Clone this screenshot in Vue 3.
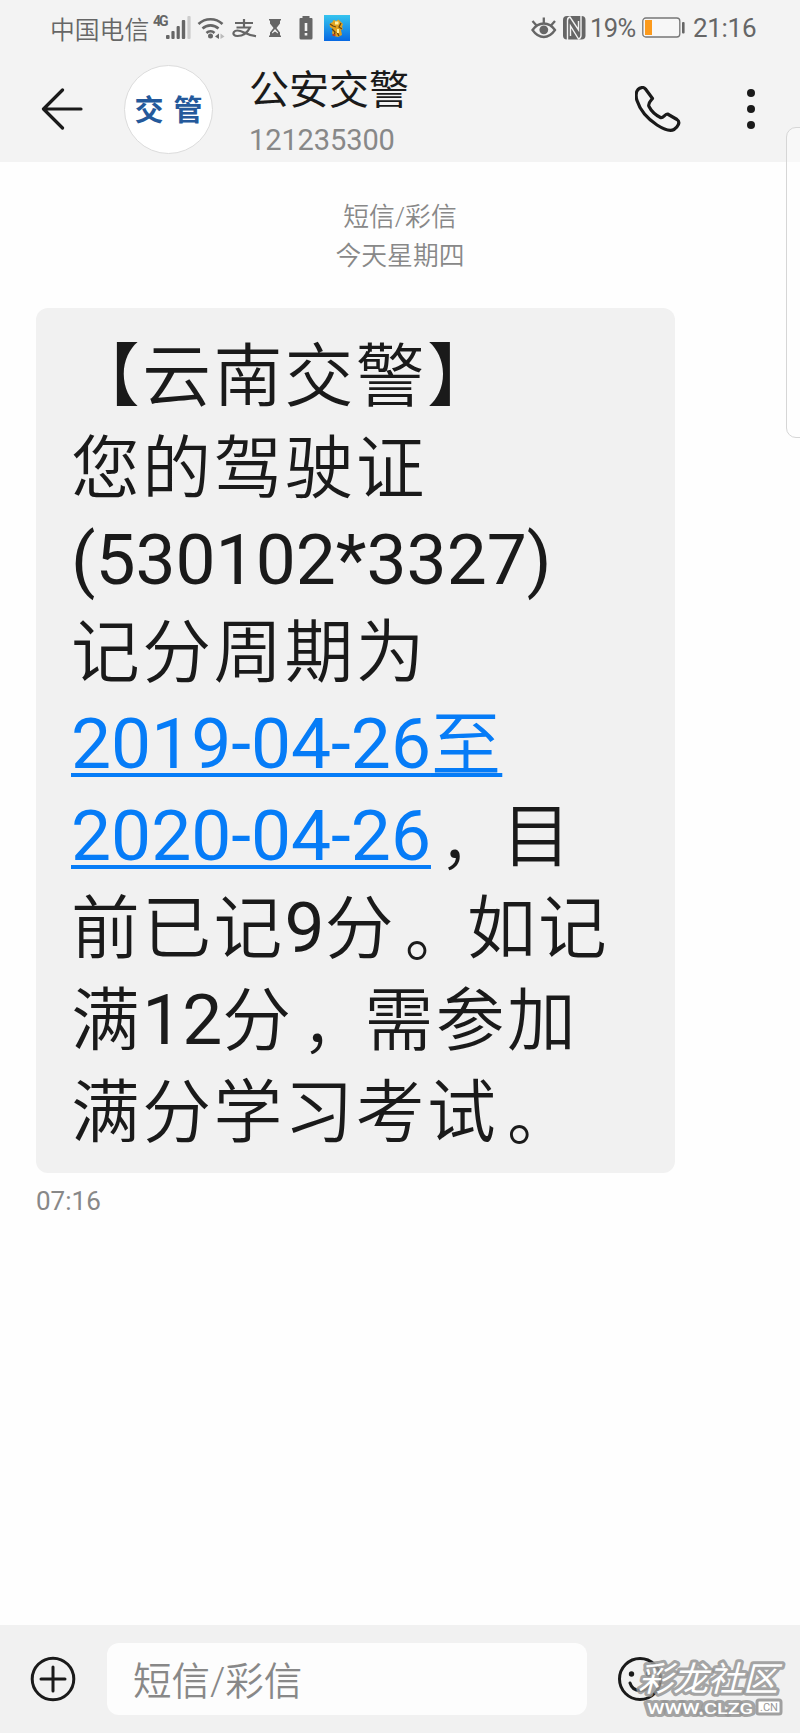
<template>
  <div class="phone">
    <header class="top">
      <div class="status-bar">
        <div class="status-left">
          <span class="carrier">中国电信</span>
          <span class="network">4G</span>
          <svg class="signal" width="26" height="24" viewBox="0 0 26 24">
            <rect x="0" y="19" width="3.6" height="4" rx="1" fill="#666" />
            <rect x="5.4" y="15" width="3.2" height="8" rx="1" fill="#666" />
            <rect x="10.6" y="10" width="3.2" height="13" rx="1" fill="#666" />
            <rect x="15.8" y="4" width="3.4" height="19" rx="1" fill="#666" />
            <rect x="21.4" y="0" width="3.2" height="23" rx="1" fill="#ccc" />
          </svg>
          <svg class="wifi" width="28" height="24" viewBox="0 0 28 24" fill="none" stroke="#666" stroke-width="2.6">
            <path d="M1.5 8a17.5 17.5 0 0 1 24 0" />
            <path d="M5.5 12.5a11.7 11.7 0 0 1 16 0" />
            <path d="M9.5 17a5.8 5.8 0 0 1 8 0" />
            <circle cx="13.5" cy="20" r="2.5" fill="#666" stroke="none" />
            <path d="M22 17.5v5.5l-4-2.5z" fill="#666" stroke="none" />
            <path d="M23.5 17.5v5.5l4-2.5z" fill="#bbb" stroke="none" />
          </svg>
          <svg class="pay" width="25" height="19" viewBox="0 0 25 19" fill="none" stroke="#666" stroke-width="2.2">
            <path d="M3 4h18M12 0v8.5M4.5 8.5h13.5C15.5 13.5 11 17 5.5 17 2 17 .8 15 1.8 13.2 3.5 10.8 8 11.5 12 13.5c4 2 7 3 12 3.7" />
          </svg>
          <svg class="hourglass" width="14" height="18" viewBox="0 0 14 18">
            <path d="M1 0h12v1.5h-1v3L8.5 9l3.5 4.5v3h1V18H1v-1.5h1v-3L5.5 9 2 4.5v-3H1z" fill="#666" />
            <path d="M7 10l3 3.5v1L7 12.5l-3 2v-1z" fill="#f3f3f3" />
          </svg>
          <svg class="alert" width="14" height="24" viewBox="0 0 14 24">
            <path d="M3.5 0h7v2h2q1 0 1 1v19q0 1.5-1.5 1.5h-10Q.5 23.5.5 22V3q0-1 1-1h2z" fill="#666" />
            <path d="M5.7 7h2.6v8H5.7zM5.7 17h2.6v2.5H5.7z" fill="#f3f3f3" />
          </svg>
          <svg class="game" width="26" height="26" viewBox="0 0 26 26">
            <defs>
              <linearGradient id="sky" x1="0" y1="0" x2="0" y2="1">
                <stop offset="0" stop-color="#35c4ee" />
                <stop offset="1" stop-color="#0768e2" />
              </linearGradient>
            </defs>
            <rect width="26" height="26" fill="url(#sky)" />
            <path d="M5.5 9l3-2 1-2 3 1 2-1.5L17 7l2 2-1 3 1 2-2 1 1 5-4 2-4-1-2-3 1-4-3-2z" fill="#e0a21f" />
            <path d="M6 9l3 2 3 1M8 14l3 3-1 4M17 8l-2 4 3 2M13 17l2 4" stroke="#684514" stroke-width="1.3" fill="none" />
            <path d="M11 6.5h3.5v3H11zM13 14h2v4h-2z" fill="#fff0a0" />
            <path d="M8.5 19h3v2h-3z" fill="#b7402a" />
          </svg>
        </div>
        <div class="status-right">
          <svg class="eye" width="26" height="22" viewBox="0 0 26 22" fill="none" stroke="#666" stroke-width="2.3">
            <path d="M1.5 13C5 8 9 6.5 12.8 6.5S20.5 8 24 13c-3.5 5-7.5 7-11.2 7S5 18 1.5 13z" />
            <path d="M12.8 6V.5M5.5 8.5L1.5 4M20 8.5L24 4" />
            <circle cx="12.8" cy="12.8" r="4.4" fill="#666" stroke="none" />
          </svg>
          <svg class="nfc" width="24" height="24" viewBox="0 0 24 24">
            <rect x="1" y="0" width="22.5" height="23.5" rx="4" fill="#666" />
            <path d="M5.5 24V4.5Q5.5 1.5 8 1l8.500 13V5M19 0v19.5q0 2.500-2.500 3.500L8.500 10v10" fill="none" stroke="#f3f3f3" stroke-width="1.4" />
          </svg>
          <span class="percent">19%</span>
          <svg class="battery" width="44" height="22" viewBox="0 0 44 22">
            <rect x=".8" y="1" width="37" height="19" rx="3" fill="#f7f7f7" stroke="#777" stroke-width="1.3" />
            <rect x="3" y="3" width="7" height="15" fill="#fc9a1c" />
            <rect x="40" y="5" width="2.6" height="11.5" rx="1" fill="#666" />
          </svg>
          <span class="clock">21:16</span>
        </div>
      </div>
      <div class="title-bar">
        <svg class="back" width="42" height="42" viewBox="0 0 42 42">
          <path d="M21.5 2L2.5 21l19 19M3 21h37" fill="none" stroke="#1a1a1a" stroke-width="3.2" stroke-linecap="round" stroke-linejoin="round" />
        </svg>
        <div class="avatar"><span>交</span><span>管</span></div>
        <div class="contact">
          <div class="name">公安交警</div>
          <div class="number">121235300</div>
        </div>
        <svg class="call" width="46" height="46" viewBox="0 0 46 46">
          <path d="M3 3.500C5 1.500 8.500.5 10.500 3L17.500 12.500C15.500 15 12.500 17.500 14 20.500C16 24.500 20.500 29 25.500 31.500C28 32.700 30 28 32.500 28L42 33.500C46 36 42.500 41.500 39 43.500C34.500 46 27.500 42.500 22 39C13 33 5 24 2 14.500C.5 9.500.8 6 3 3.500Z" fill="none" stroke="#1a1a1a" stroke-width="3.2" stroke-linejoin="round" />
        </svg>
        <svg class="more" width="8" height="42" viewBox="0 0 8 42">
          <circle v-for="y in [5, 21, 37]" :key="y" cx="4" :cy="y" r="4" fill="#1a1a1a" />
        </svg>
      </div>
    </header>

    <main class="thread">
      <div class="thread-info">
        <div>短信/彩信</div>
        <div>今天星期四</div>
      </div>
      <div class="bubble">
        <div class="line" v-for="(line, index) in lines" :key="index">
          <span v-for="(part, i) in line" :key="i" :class="part.type">{{ part.text }}</span>
        </div>
      </div>
      <div class="time">07:16</div>
    </main>

    <footer class="composer">
      <svg class="add" width="46" height="46" viewBox="0 0 46 46" fill="none" stroke="#1a1a1a" stroke-width="3">
        <circle cx="23" cy="23" r="20.8" />
        <path d="M23 11v24M11 23h24" stroke-linecap="round" />
      </svg>
      <input class="message-input" v-model="message" placeholder="短信/彩信" />
      <svg class="smile" width="46" height="46" viewBox="0 0 46 46" fill="none" stroke="#1a1a1a" stroke-width="3">
        <circle cx="23" cy="23" r="20.5" />
        <circle cx="14.5" cy="18" r="2.7" fill="#1a1a1a" stroke="none" />
        <circle cx="31.5" cy="18" r="2.7" fill="#1a1a1a" stroke="none" />
        <path d="M13 27c3 10 17 10 20 0" stroke-linecap="round" />
      </svg>
    </footer>

    <div class="edge-panel"></div>
    <svg class="watermark" width="156" height="72" viewBox="0 0 156 72">
      <text class="wm-name" x="6" y="35" textLength="140" lengthAdjust="spacingAndGlyphs">彩龙社区</text>
      <text class="wm-url" x="15" y="58" textLength="106" lengthAdjust="spacingAndGlyphs">WWW.CLZG</text>
      <rect x="125" y="44" width="24" height="14" rx="2" fill="#fff" stroke="#a0a0a0" stroke-width="3" />
      <text class="wm-cn" x="128" y="55" textLength="18" lengthAdjust="spacingAndGlyphs">.CN</text>
    </svg>
  </div>
</template>

<script setup>
import { ref } from 'vue'

const message = ref('')

const lines = [
  [{ text: '【云南交警】', type: 'han' }],
  [{ text: '您的驾驶证', type: 'han' }],
  [{ text: '(530102*3327)' }],
  [{ text: '记分周期为', type: 'han' }],
  [{ text: '2019-04-26', type: 'date' }, { text: '至', type: 'date date-han' }],
  [{ text: '2020-04-26', type: 'date' }, { text: '，', type: 'mark' }, { text: '目', type: 'han' }],
  [
    { text: '前已记', type: 'han' },
    { text: '9' },
    { text: '分', type: 'han' },
    { text: '。', type: 'mark' },
    { text: '如记', type: 'han' },
  ],
  [
    { text: '满', type: 'han' },
    { text: '12' },
    { text: '分', type: 'han' },
    { text: '，', type: 'mark' },
    { text: '需参加', type: 'han' },
  ],
  [{ text: '满分学习考试', type: 'han' }, { text: '。', type: 'mark' }],
]
</script>

<style>
body {
  background: #fff;
}
</style>

<style scoped>
.phone {
  position: relative;
  display: flex;
  flex-direction: column;
  width: 800px;
  height: 1733px;
  overflow: hidden;
  background: #fefefe;
  color: #1a1a1a;
  font-family: Roboto, 'Noto Sans CJK SC', sans-serif;
  text-spacing-trim: space-all;
}

.phone svg {
  display: block;
  flex-shrink: 0;
}

.top {
  height: 162px;
  background: #f3f3f3;
}

.status-bar {
  display: flex;
  justify-content: space-between;
  height: 56px;
  padding: 0 45px 0 50px;
  color: #666;
  font-size: 26px;
}

.status-left,
.status-right {
  display: flex;
  align-items: center;
}

.carrier {
  width: 103px;
  font-family: 'Noto Sans CJK SC DemiLight', 'Noto Sans CJK SC', sans-serif;
  font-size: 24.8px;
  font-weight: 350;
  white-space: nowrap;
}

.network {
  width: 13px;
  margin-top: -14px;
  font-size: 14px;
  font-weight: 700;
  letter-spacing: -2px;
}

.wifi {
  margin-left: 5px;
}

.pay {
  margin-left: 7px;
}

.hourglass {
  margin-left: 11px;
}

.alert {
  margin-left: 17px;
}

.game {
  margin-left: 11px;
}

.nfc {
  margin-left: 5px;
}

.percent {
  width: 52px;
  margin-left: 4px;
  font-size: 25.5px;
  letter-spacing: -0.6px;
}

.battery {
  margin-right: 7px;
}

.clock {
  width: 62px;
  letter-spacing: -0.3px;
}

.title-bar {
  display: flex;
  align-items: center;
  height: 106px;
  padding-left: 41px;
}

.avatar {
  display: flex;
  align-items: center;
  justify-content: center;
  gap: 10px;
  box-sizing: border-box;
  width: 89px;
  height: 89px;
  padding-bottom: 3px;
  margin-left: 41px;
  border: 1px solid #dcdcdc;
  border-radius: 50%;
  background: #fff;
  color: #24599b;
  font-size: 29px;
  font-weight: 700;
}

.contact {
  width: 348px;
  margin-left: 36px;
}

.name {
  height: 46px;
  margin-top: 7px;
  font-size: 40px;
  line-height: 44px;
}

.number {
  height: 34px;
  margin-top: 8px;
  color: #888;
  font-size: 29px;
  line-height: 34px;
  letter-spacing: -0.1px;
}

.call {
  margin-left: 38px;
}

.more {
  margin-left: 66px;
}

.thread {
  flex: 1;
  padding: 36px 36px 0;
}

.thread-info {
  height: 110px;
  color: #888;
  font-family: Roboto, 'Noto Sans CJK SC DemiLight', 'Noto Sans CJK SC', sans-serif;
  font-size: 25.8px;
  font-weight: 350;
  line-height: 39px;
  text-align: center;
}

.bubble {
  box-sizing: border-box;
  width: 639px;
  height: 865px;
  padding: 22px 35px 0;
  border-radius: 12px;
  background: #f1f1f1;
  font-size: 71.3px;
}

.line {
  display: flex;
  height: 92px;
  line-height: 92px;
  white-space: nowrap;
}

.han {
  margin-top: -5px;
  font-family: 'Noto Sans CJK SC DemiLight', 'Noto Sans CJK SC', sans-serif;
  font-size: 68.8px;
  font-weight: 350;
  letter-spacing: 2.4px;
}

.date {
  height: 80px;
  color: #067cf7;
  text-decoration: underline;
  text-decoration-thickness: 4px;
  text-underline-offset: 5px;
  text-decoration-skip-ink: none;
}

.date-han {
  margin-top: 2px;
  font-family: Roboto, 'Noto Sans CJK SC DemiLight', 'Noto Sans CJK SC', sans-serif;
  font-weight: 350;
  font-size: 70px;
  letter-spacing: 1.3px;
  text-underline-offset: 3px;
}

/* fullwidth punctuation sits nearer the middle of its cell */
.mark {
  width: 62px;
  margin-top: 1px;
  padding-left: 9px;
  font-family: 'Noto Sans CJK SC DemiLight', 'Noto Sans CJK SC', sans-serif;
  font-size: 62px;
  font-weight: 350;
}

.time {
  margin-top: 12px;
  color: #888;
  font-size: 26px;
  line-height: 32px;
}

.composer {
  display: flex;
  align-items: center;
  height: 108px;
  padding-left: 30px;
  background: #f1f1f1;
}

.message-input {
  box-sizing: border-box;
  width: 480px;
  height: 72px;
  margin: 0 30px 0 31px;
  padding: 4px 26px 0;
  border: none;
  border-radius: 12px;
  background: #fdfdfd;
  font-family: Roboto, 'Noto Sans CJK SC DemiLight', 'Noto Sans CJK SC', sans-serif;
  font-size: 38.5px;
  font-weight: 350;
}

.message-input::placeholder {
  color: #888;
}

.edge-panel {
  position: absolute;
  top: 127px;
  left: 786px;
  width: 30px;
  height: 309px;
  border: 1px solid #d6d6d6;
  border-radius: 10px;
  background: rgba(255, 255, 255, 0.4);
}

.watermark {
  position: absolute;
  right: 12px;
  bottom: 5px;
}

.wm-name,
.wm-url {
  fill: #fff;
  stroke: rgba(150, 150, 150, 0.85);
  stroke-width: 6px;
  stroke-linejoin: round;
  paint-order: stroke;
}

.wm-name {
  font-size: 34px;
  font-style: italic;
}

.wm-url {
  font-size: 15px;
  font-weight: 500;
}

.wm-cn {
  fill: #999;
  font-size: 10px;
}
</style>
